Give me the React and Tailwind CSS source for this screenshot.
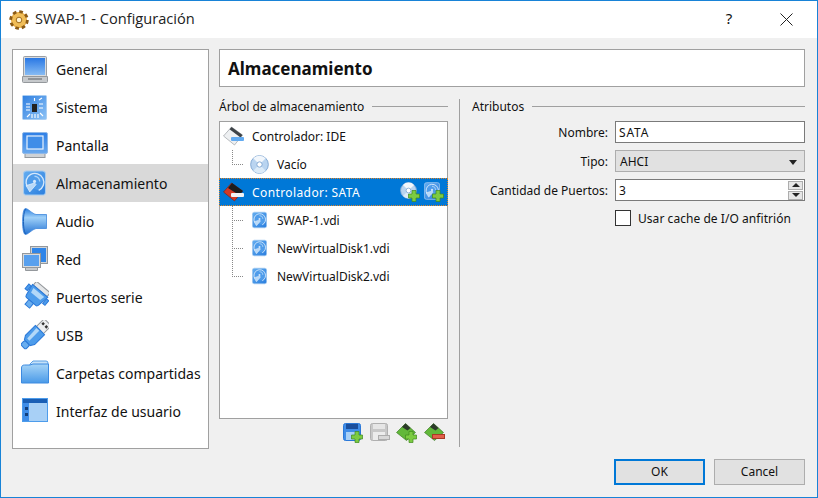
function GeneralIcon() {
  return (
    <svg width="26" height="27" viewBox="0 0 26 27">
      <defs>
        <linearGradient id="genScr" x1="0" y1="0" x2="0" y2="1">
          <stop offset="0" stopColor="#2a78e4" />
          <stop offset="1" stopColor="#86bbf3" />
        </linearGradient>
      </defs>
      <rect x="1.500" y="0.500" width="23" height="20" rx="1" fill="#d8dbde" stroke="#9a9ea3" />
      <rect x="3" y="2" width="20" height="17" fill="url(#genScr)" />
      <path d="M0.500 20.500h25v5a1 1 0 0 1-1 1h-23a1 1 0 0 1-1-1z" fill="#c6c9cc" stroke="#94989c" />
      <rect x="6" y="22" width="14" height="2" fill="#8f9397" />
    </svg>
  )
}

function ScreenIcon() {
  return (
    <svg width="26" height="26" viewBox="0 0 26 26">
      <defs>
        <linearGradient id="scrBody" x1="0" y1="0" x2="0" y2="1">
          <stop offset="0" stopColor="#2e7fe6" />
          <stop offset="1" stopColor="#6aa9ee" />
        </linearGradient>
      </defs>
      <rect x="3" y="21" width="20" height="4.500" fill="#cfd2d5" stroke="#94989c" />
      <rect x="0.500" y="0.500" width="25" height="21" rx="1.500" fill="url(#scrBody)" stroke="#8fb8e8" />
      <rect x="5" y="4" width="16" height="13" fill="#3f8de8" stroke="#e8f2fc" strokeWidth="1.200" />
    </svg>
  )
}

function ChipIcon() {
  return (
    <svg width="25" height="25" viewBox="0 0 25 25">
      <defs>
        <linearGradient id="chipBg" x1="0" y1="0" x2="1" y2="1">
          <stop offset="0" stopColor="#2f7fe0" />
          <stop offset="1" stopColor="#8ec3f6" />
        </linearGradient>
      </defs>
      <rect x="0.500" y="0.500" width="24" height="24" rx="1" fill="url(#chipBg)" stroke="#a9cdf2" />
      <rect x="10" y="9" width="5" height="8" fill="#222" />
      <path d="M12.500 3v3M4 9h4M4 12h4M4 15h4M17 9h4M17 13h4M17 5l3-2M5 22l3-3M18 18l3 3M13 19v4M16 19v4M10 19v4" stroke="#fff" strokeWidth="1.100" />
    </svg>
  )
}

function DiskIcon({ size = 22, h }) {
  return (
    <svg width={size} height={h || size} viewBox="0 0 22 24">
      <defs>
        <linearGradient id="dsk" x1="0" y1="0" x2="1" y2="1">
          <stop offset="0" stopColor="#64adf0" />
          <stop offset="1" stopColor="#2a7ede" />
        </linearGradient>
      </defs>
      <rect x="0.500" y="0.500" width="21" height="23" rx="3" fill="url(#dsk)" stroke="#a5cbf0" />
      <path d="M4 15.500A8.500 8.500 0 1 1 15 19" fill="#4f9cea" stroke="#d5e8fb" strokeWidth="1.300" />
      <path d="M11 5.500A5 5 0 0 1 16 10.500" fill="none" stroke="#a9d2f7" strokeWidth="1.300" />
      <circle cx="11" cy="10.500" r="1.500" fill="#d5e8fb" />
      <path d="M3 14.500l8-2.500 1.500 1.500-6 7z" fill="#b8d9f8" stroke="#e6f1fc" strokeWidth="0.700" />
    </svg>
  )
}

function AudioIcon() {
  return (
    <svg width="25" height="27" viewBox="0 0 25 27">
      <defs>
        <linearGradient id="aud" x1="0" y1="0" x2="0" y2="1">
          <stop offset="0" stopColor="#2a7fe0" />
          <stop offset="0.350" stopColor="#9fd0f8" />
          <stop offset="1" stopColor="#2574d4" />
        </linearGradient>
      </defs>
      <path d="M3.500 0.500C6 0.500 10 5.500 14 6.500H24.500V20.500H14C10 21.500 6 26.500 3.500 26.500 1.500 26.500 0.500 20 0.500 13.500 0.500 7 1.500 0.500 3.500 0.500z" fill="url(#aud)" stroke="#2f7dd8" strokeWidth="0.700" />
      <path d="M3.500 1C1.800 4 1.500 9 1.500 13.500s.3 9.500 2 12.500" fill="none" stroke="#1d62bb" />
    </svg>
  )
}

function NetworkIcon() {
  return (
    <svg width="26" height="26" viewBox="0 0 26 26">
      <rect x="8.500" y="0.500" width="17" height="17" fill="#d0d3d6" stroke="#94989c" />
      <rect x="10" y="2" width="14" height="14" fill="#2f85e8" />
      <rect x="0.500" y="7.500" width="18" height="14" fill="#d8dbde" stroke="#94989c" />
      <rect x="2" y="9" width="15" height="11" fill="#58a0ee" />
      <path d="M3.500 21.500h12v3h-12z" fill="#c6c9cc" stroke="#94989c" />
    </svg>
  )
}

function SerialIcon() {
  return (
    <svg width="28" height="30" viewBox="0 0 28 30">
      <g transform="rotate(40 14 15)">
        <rect x="5" y="2" width="18" height="5" rx="1" fill="#e4e6e8" stroke="#94989c" />
        <path d="M4 7h20l-2 12c-.2 1-1 2-2 2H8c-1 0-1.800-1-2-2z" fill="#4d9ceb" stroke="#2a78d8" />
        <path d="M7 9h14l-1 5H8z" fill="#b2d8f8" />
        <rect x="1" y="9" width="3" height="6" fill="#4d9ceb" stroke="#2a78d8" />
        <rect x="24" y="9" width="3" height="6" fill="#4d9ceb" stroke="#2a78d8" />
        <rect x="11" y="21" width="6" height="6" fill="#6aaeef" stroke="#2a78d8" />
      </g>
    </svg>
  )
}

function UsbIcon() {
  return (
    <svg width="28" height="30" viewBox="0 0 28 30">
      <g transform="rotate(45 14 15)">
        <rect x="9" y="-3" width="10" height="11" fill="#eceef0" stroke="#94989c" />
        <rect x="10.500" y="0" width="2.500" height="2.500" fill="#333" />
        <rect x="15" y="0" width="2.500" height="2.500" fill="#333" />
        <path d="M7.500 8h13v14l-2.500 4h-8l-2.500-4z" fill="#4d9ceb" stroke="#2a78d8" />
        <path d="M10 9h4v14h-3z" fill="#b2d8f8" />
        <rect x="10.500" y="26" width="7" height="6" rx="2" fill="#6aaeef" stroke="#2a78d8" />
      </g>
    </svg>
  )
}

function FolderIcon() {
  return (
    <svg width="28" height="24" viewBox="0 0 28 24" className="-mt-[3px]">
      <defs>
        <linearGradient id="fld" x1="0" y1="0" x2="0" y2="1">
          <stop offset="0" stopColor="#a6d4f7" />
          <stop offset="1" stopColor="#4a9ae8" />
        </linearGradient>
      </defs>
      <path d="M9 4l3-3h13a2 2 0 0 1 2 2v4H9z" fill="#c5e1f8" stroke="#5aa0e4" />
      <path d="M0.500 8c0-2 1-3 3-3H9l3-1h15.500v19h-27z" fill="url(#fld)" stroke="#3d8ae0" />
    </svg>
  )
}

function WindowIcon() {
  return (
    <svg width="26" height="24" viewBox="0 0 26 24" className="-mt-[2px]">
      <rect x="0.500" y="0.500" width="25" height="23" fill="#a8d0f6" stroke="#4d9ceb" />
      <rect x="1" y="1" width="24" height="4" fill="#1b5fb5" />
      <rect x="1" y="5" width="6" height="18" fill="#3f8de8" />
      <rect x="3" y="9" width="3" height="3" fill="#123f7c" />
      <rect x="3" y="15" width="3" height="3" fill="#123f7c" />
    </svg>
  )
}

function ControllerIcon({ sata }) {
  return (
    <svg width="21" height="20" viewBox="0 0 21 20">
      <path d="M0.500 10l8-9 11 8-8 10z" fill={sata ? '#d23a26' : '#eef0f2'} stroke={sata ? '#7a1c10' : '#8d9297'} strokeWidth="0.600" />
      {sata ? (
        <path d="M5 6l4-5 11 8-4 4z" fill="#1d1d1d" />
      ) : (
        <path d="M6.500 3.200l2-2.200 11 8-2 2.500z" fill="#3e4347" />
      )}
      <rect x="8" y="11" width="13" height="4" rx="1" fill={sata ? '#f1f3f5' : '#62aaf0'} />
    </svg>
  )
}

function CdIcon({ size = 19 }) {
  return (
    <svg width={size} height={size} viewBox="0 0 20 20">
      <circle cx="10" cy="10" r="9.300" fill="#b9d4f0" stroke="#7fa7d2" />
      <path d="M10 10L3.500 3.500A9 9 0 0 1 16.500 3.500z" fill="#f2f7fc" />
      <path d="M10 10L16.500 16.500A9 9 0 0 1 3.500 16.500z" fill="#dcebf8" />
      <circle cx="10" cy="10" r="2.800" fill="#fff" stroke="#7fa7d2" />
    </svg>
  )
}

function PlusBadge() {
  return (
    <svg className="absolute right-0 bottom-0" width="12" height="12" viewBox="0 0 12 12">
      <path d="M4 0.500h4v3.500h3.500v4H8v3.500H4V8H0.500V4H4z" fill="#7ccb42" stroke="#3f8a1c" strokeWidth="0.700" />
    </svg>
  )
}

function AddAttachment({ kind }) {
  return (
    <span className="relative inline-flex w-[20px] h-[20px]">
      {kind === 'cd' ? <CdIcon size={17} /> : <DiskIcon size={16} h={18} />}
      <PlusBadge />
    </span>
  )
}

function FloppyIcon({ off }) {
  const body = off ? '#c8c8c8' : '#3f8de8'
  const edge = off ? '#b0b0b0' : '#2a78d8'
  return (
    <span className={`relative inline-flex w-5 h-5 ${off ? '-mr-px' : ''}`}>
      <svg width="18" height="18" viewBox="0 0 18 18">
        <rect x="0.500" y="0.500" width="17" height="17" rx="2" fill={body} stroke={edge} />
        <rect x="3" y="1" width="12" height="5" fill={off ? '#e6e6e6' : '#1b4f9c'} />
        <rect x="3" y="9" width="12" height="8" fill={off ? '#ececec' : '#a8d0f6'} />
      </svg>
      {off ? (
        <span className="absolute right-0 bottom-[3px] w-[12px] h-[5px] bg-[#d8d8d8] border border-[#adadad]" />
      ) : (
        <PlusBadge />
      )}
    </span>
  )
}

function ControllerAction({ remove }) {
  return (
    <span className="relative inline-flex w-[21px] h-5">
      <svg width="20" height="18" viewBox="0 0 20 18">
        <path d="M0.500 9.500l9-9 10 9-9 8z" fill="#62b83a" stroke="#2f6e18" strokeWidth="0.600" />
        <path d="M6 4l3.500-3.500 5 4.500-3 2.500z" fill="#2c3a2a" />
      </svg>
      {remove ? (
        <span className="absolute right-0 bottom-[4px] w-[13px] h-[5px] bg-[#e2604a] border border-[#a93a26]" />
      ) : (
        <PlusBadge />
      )}
    </span>
  )
}

const menuItems = [
  { label: 'General', icon: <GeneralIcon /> },
  { label: 'Sistema', icon: <ChipIcon /> },
  { label: 'Pantalla', icon: <ScreenIcon /> },
  { label: 'Almacenamiento', icon: <DiskIcon size={23} h={26} />, active: true },
  { label: 'Audio', icon: <AudioIcon /> },
  { label: 'Red', icon: <NetworkIcon /> },
  { label: 'Puertos serie', icon: <SerialIcon /> },
  { label: 'USB', icon: <UsbIcon /> },
  { label: 'Carpetas compartidas', icon: <FolderIcon /> },
  { label: 'Interfaz de usuario', icon: <WindowIcon /> },
]

const disks = ['SWAP-1.vdi', 'NewVirtualDisk1.vdi', 'NewVirtualDisk2.vdi']

function Connector({ last }) {
  return (
    <svg width="17" height="28" viewBox="0 0 17 28" className="shrink-0">
      <path d={last ? 'M0.500 0V15M0 14.500H12' : 'M0.500 0V28M0 14.500H12'} stroke="#888" strokeDasharray="1 1" fill="none" />
    </svg>
  )
}

function GroupTitle({ children }) {
  return (
    <div className="flex items-center gap-2 h-4">
      <span className="pt-[2px]">{children}</span>
      <span className="flex-1 h-px bg-[#a0a0a0]" />
    </div>
  )
}

export default function App() {
  return (
    <div
      className="w-[818px] h-[498px] flex flex-col bg-[#f0f0f0] border border-[#1883d7] text-[12px] text-[#111] overflow-hidden"
      style={{ fontFamily: '"Noto Sans", sans-serif' }}
    >
      <div className="h-[37px] bg-white flex items-center pl-[8px] shrink-0">
        <svg width="20" height="20" viewBox="0 0 20 20">
          <circle cx="10" cy="10" r="8" fill="#e9a93a" stroke="#8a5a16" strokeWidth="3.500" strokeDasharray="3.500 2.780" />
          <circle cx="10" cy="10" r="7" fill="#f0bd58" />
          <circle cx="10" cy="10" r="2.800" fill="#fff3d0" stroke="#a06c1c" />
        </svg>
        <span className="ml-[6px] text-[14.600px] text-[#222] pb-px" style={{ fontFamily: '"Open Sans", sans-serif' }}>
          SWAP-1 - Configuración
        </span>
        <span className="ml-auto text-[15px] w-5 text-center pb-[2px]">?</span>
        <svg className="ml-[41px] mr-[24px]" width="13" height="13" viewBox="0 0 13 13">
          <path d="M0.500 0.500L12.500 12.500M12.500 0.500L0.500 12.500" stroke="#222" strokeWidth="1" />
        </svg>
      </div>

      <div className="flex-1 flex pl-[11px] pr-[12px] pt-[11px] gap-[10px]">
        <div className="w-[197px] h-[400px] bg-white border border-[#a0a0a0] text-[14px]">
          {menuItems.map((item) => (
            <div key={item.label} className={`h-[38px] flex items-center ${item.active ? 'bg-[#d9d9d9]' : ''}`}>
              <span className="w-[43px] flex justify-center shrink-0">{item.icon}</span>
              <span>{item.label}</span>
            </div>
          ))}
        </div>

        <div className="flex-1 flex flex-col">
          <div className="h-[38px] bg-white border border-[#a0a0a0] flex items-center pl-2 pt-px text-[17px] font-bold">
            Almacenamiento
          </div>

          <div className="flex mt-[11px] h-[349px]">
            <div className="w-[229px] flex flex-col shrink-0">
              <GroupTitle>Árbol de almacenamiento</GroupTitle>
              <div className="mt-[7px] h-[298px] bg-white border border-[#a0a0a0]">
                <div className="h-[28px] flex items-center pl-[3px]">
                  <ControllerIcon />
                  <span className="ml-2 pt-[2px]">Controlador: IDE</span>
                </div>
                <div className="h-[28px] flex items-center pl-[12px]">
                  <Connector last />
                  <span className="w-[20px] flex justify-center"><CdIcon /></span>
                  <span className="ml-[8px] pt-[2px]">Vacío</span>
                </div>
                <div className="h-[28px] flex items-center pl-[3px] bg-[#0078d7] text-white border border-dotted border-[#e0862a] -mx-px">
                  <ControllerIcon sata />
                  <span className="ml-2 pt-[2px] tracking-[0.4px]">Controlador: SATA</span>
                  <span className="ml-auto mr-[3px] flex gap-[4px]">
                    <AddAttachment kind="cd" />
                    <AddAttachment kind="disk" />
                  </span>
                </div>
                {disks.map((disk, i) => (
                  <div key={disk} className="h-[28px] flex items-center pl-[12px]">
                    <Connector last={i === disks.length - 1} />
                    <span className="w-[20px] flex justify-center"><DiskIcon size={15} h={18} /></span>
                    <span className="ml-[8px] pt-[2px]">{disk}</span>
                  </div>
                ))}
              </div>
              <div className="mt-[4px] flex justify-end gap-[7px] pr-[3px]">
                <FloppyIcon />
                <FloppyIcon off />
                <ControllerAction />
                <ControllerAction remove />
              </div>
            </div>

            <div className="ml-[11px] w-px bg-[#a0a0a0] mt-px" />

            <div className="flex-1 pl-[12px]">
              <GroupTitle>Atributos</GroupTitle>
              <div className="mt-[7px] grid grid-cols-[136px_1fr] gap-x-[7px] gap-y-[7px] items-center">
                <label className="text-right pt-[2px]">Nombre:</label>
                <div className="h-[22px] bg-white border border-[#7a7a7a] flex items-center pl-[3px] pt-[2px] tracking-[0.8px]">SATA</div>
                <label className="text-right pt-[2px]">Tipo:</label>
                <div className="h-[22px] bg-[#e1e1e1] border border-[#adadad] flex items-center pl-[4px] pt-[2px]">
                  AHCI
                  <span className="ml-auto mr-[7px] w-0 h-0 border-x-[4px] border-x-transparent border-t-[5px] border-t-[#222]" />
                </div>
                <label className="text-right whitespace-nowrap pt-[2px]">Cantidad de Puertos:</label>
                <div className="h-[22px] bg-white border border-[#7a7a7a] flex items-center pl-[3px]">
                  <span className="pt-[2px]">3</span>
                  <span className="ml-auto mr-px flex flex-col gap-px">
                    <span className="w-[15px] h-[9px] bg-[#e6e6e6] border border-[#adadad] flex items-center justify-center">
                      <span className="w-0 h-0 border-x-[4px] border-x-transparent border-b-[4px] border-b-[#222]" />
                    </span>
                    <span className="w-[15px] h-[9px] bg-[#e6e6e6] border border-[#adadad] flex items-center justify-center">
                      <span className="w-0 h-0 border-x-[4px] border-x-transparent border-t-[4px] border-t-[#222]" />
                    </span>
                  </span>
                </div>
                <span />
                <div className="h-5 flex items-center">
                  <span className="w-4 h-4 bg-white border border-[#333]" />
                  <span className="ml-[7px] pt-[2px] tracking-[0.05px]">Usar cache de I/O anfitrión</span>
                </div>
              </div>
            </div>
          </div>
        </div>
      </div>

      <div className="h-[38px] flex justify-end gap-[9px] pr-[12px] shrink-0">
        <button className="w-[91px] h-[26px] bg-[#e1e1e1] border-2 border-[#0078d7]">OK</button>
        <button className="w-[91px] h-[26px] bg-[#e1e1e1] border border-[#adadad]">Cancel</button>
      </div>
    </div>
  )
}
